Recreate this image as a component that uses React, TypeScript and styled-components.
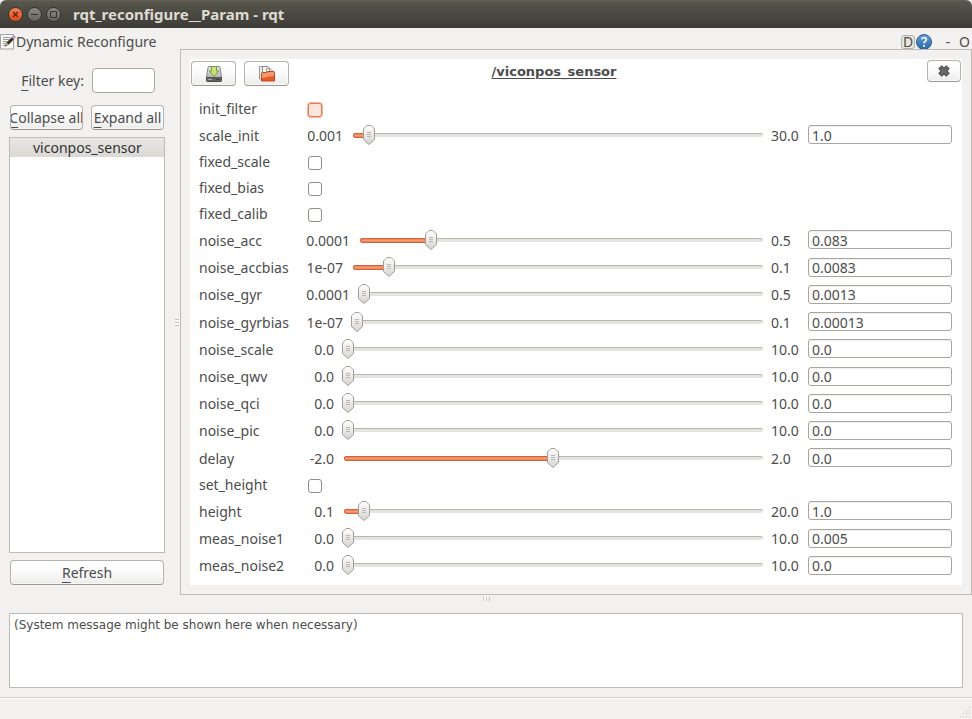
import React, { useState } from 'react';
import styled, { createGlobalStyle, css } from 'styled-components';

const GlobalStyle = createGlobalStyle`
  * { box-sizing: border-box; }
  html, body { margin: 0; padding: 0; }
  body {
    background: #f2f1ef;
    color: #4c4c4c;
    font: 14px/20px "Noto Sans", "Open Sans", sans-serif;
  }
  button, input, textarea { font: inherit; color: inherit; margin: 0; }
`;

const raised = css`
  border: 1px solid #b5b2ad;
  border-bottom-color: #9c9993;
  border-radius: 4px;
  background: linear-gradient(#ffffff 0%, #fbfbfb 45%, #ececeb 100%);
  box-shadow: inset 0 0 0 1px #ffffff99;
`;

const Window = styled.div`
  display: flex;
  flex-direction: column;
  min-height: 100vh;
`;

const TitleBar = styled.header`
  display: flex;
  align-items: center;
  gap: 4px;
  height: 28px;
  padding: 0 8px;
  border-radius: 6px 6px 0 0;
  background: linear-gradient(#65635a 0, #57564b 2px, #3c3b37 100%);
`;

const WindowTitle = styled.h1`
  margin: 0 0 0 8px;
  font-size: 15px;
  line-height: 20px;
  font-weight: 700;
  color: #dfdbd2;
  white-space: nowrap;
`;

const WindowButton = styled.button<{ $close?: boolean }>`
  display: flex;
  width: 15px;
  height: 15px;
  padding: 0;
  border: 1px solid #34332e;
  border-radius: 50%;
  background: ${p => (p.$close ? 'linear-gradient(#f4825c, #df4a16)' : 'linear-gradient(#8b897f, #66645c)')};
`;

const DockHeader = styled.div`
  display: flex;
  align-items: center;
  height: 21px;
  padding: 6px 2px 0 0;
`;

const DockTitle = styled.h2`
  flex: 1;
  margin: 0;
  font-size: 14px;
  line-height: 14px;
  font-weight: 400;
  white-space: nowrap;
`;

const DockButton = styled.button<{ $framed?: boolean; $gap?: number }>`
  display: flex;
  align-items: center;
  justify-content: center;
  min-width: ${p => (p.$framed ? '14px' : '8px')};
  height: 14px;
  margin-left: ${p => p.$gap ?? 0}px;
  padding: 0;
  border: ${p => (p.$framed ? '1px solid #b5b2ad' : 'none')};
  border-radius: 3px;
  background: ${p => (p.$framed ? '#e9e6e0' : 'none')};
  line-height: 14px;
`;

const Body = styled.main`
  flex: 1;
  display: flex;
  min-height: 0;
`;

const Sidebar = styled.aside`
  display: flex;
  flex-direction: column;
  width: 172px;
  padding: 19px 7px 10px 9px;
`;

const FilterRow = styled.div`
  display: flex;
  align-items: center;
  justify-content: flex-end;
  gap: 8px;
  padding-right: 10px;
`;

const Label = styled.label`
  white-space: nowrap;
`;

const Mnemonic = styled.span`
  text-decoration: underline;
  text-decoration-thickness: 1px;
  text-underline-offset: 4px;
`;

const FilterInput = styled.input`
  width: 63px;
  height: 25px;
  padding: 0 4px;
  border: 1px solid #a9a6a0;
  border-radius: 4px;
  background: #fff;
`;

const ButtonRow = styled.div`
  display: flex;
  gap: 8px;
  margin: 12px 0 7px;
  padding: 0 1px;
`;

const PushButton = styled.button`
  ${raised}
  flex: 1;
  display: flex;
  align-items: center;
  justify-content: center;
  min-width: 0;
  height: 25px;
  padding: 0;
  overflow: hidden;
  white-space: nowrap;
`;

const NodeList = styled.ul`
  flex: 1;
  margin: 0;
  padding: 0;
  border: 1px solid #bebbb6;
  background: #fff;
  list-style: none;
`;

const NodeItem = styled.li`
  height: 19px;
  padding-left: 23px;
  background: linear-gradient(#e8e7e6, #dbd8d5);
  line-height: 20px;
  color: #323232;
`;

const RefreshRow = styled.div`
  display: flex;
  margin-top: 7px;
  padding: 0 1px;
`;

const Splitter = styled.div<{ $row?: boolean }>`
  display: flex;
  align-items: center;
  justify-content: center;
  ${p => (p.$row ? 'height: 8px;' : 'width: 8px;')}
`;

const Frame = styled.section`
  flex: 1;
  display: flex;
  min-width: 0;
  padding: 9px;
  border: 1px solid #bebbb6;
`;

const Panel = styled.form`
  flex: 1;
  display: flex;
  flex-direction: column;
  min-width: 0;
  padding: 1px 1px 5px;
  background: #fff;
`;

const Tools = styled.div`
  display: grid;
  grid-template-columns: 1fr auto 1fr;
  height: 36px;
`;

const ToolGroup = styled.div`
  display: flex;
  gap: 8px;
  padding-top: 1px;
`;

const ToolButton = styled.button<{ $small?: boolean }>`
  ${raised}
  display: flex;
  align-items: center;
  justify-content: center;
  justify-self: end;
  width: ${p => (p.$small ? '34px' : '45px')};
  height: ${p => (p.$small ? '22px' : '25px')};
  padding: 0;
`;

const NodeTitle = styled.h3`
  margin: 2px 44px 0 0;
  font: 700 13px/20px "DejaVu Sans", sans-serif;
  text-decoration: underline;
  text-decoration-thickness: 1px;
  text-underline-offset: 2px;
`;

const Rows = styled.div`
  flex: 1;
  display: flex;
  flex-direction: column;
  padding: 0 9px 0 8px;
`;

const Row = styled.div<{ $check?: boolean }>`
  display: grid;
  grid-template-columns: 98px 1fr;
  column-gap: 8px;
  align-items: center;
  ${p => (p.$check ? 'flex: 0 0 26px;' : 'flex: 1 0 27px;')}
`;

const Controls = styled.div`
  display: flex;
  align-items: center;
  gap: 8px;
  min-width: 0;
`;

const Limit = styled.span<{ $w: number; $left?: boolean }>`
  flex: 0 0 ${p => p.$w}px;
  text-align: ${p => (p.$left ? 'left' : 'right')};
  white-space: nowrap;
`;

const SliderBox = styled.div`
  flex: 1;
  display: grid;
  align-items: center;
  min-width: 0;
  margin-bottom: 2px;
`;

const Groove = styled.div`
  grid-area: 1 / 1;
  height: 4px;
  margin-left: 2px;
  border-top: 1px solid #b9b6ae;
  border-radius: 2px;
  background: #e4e3e0;
`;

const Fill = styled.div`
  height: 5px;
  margin-top: -1px;
  border: 1px solid #d2633c;
  border-radius: 2px;
  background: linear-gradient(#ee7a4d, #fa9e76 50%, #ee7a4d);
`;

const thumb = `<svg xmlns='http://www.w3.org/2000/svg' width='12' height='20'><defs><linearGradient id='g' x2='0' y2='1'><stop stop-color='#fff'/><stop offset='1' stop-color='#d6d4d1'/></linearGradient></defs><path d='M4 .5h4l3.500 3.500v10.500l-5.500 5-5.500-5v-10.500z' fill='url(#g)' stroke='#a19e99' stroke-linejoin='round'/><path d='M4 7.500h4M4 9.500h4M4 11.500h4' stroke='#bbb8b4'/></svg>`;

const Range = styled.input`
  grid-area: 1 / 1;
  appearance: none;
  width: 100%;
  min-width: 0;
  height: 20px;
  background: transparent;
  outline: none;
  &::-webkit-slider-thumb {
    appearance: none;
    width: 12px;
    height: 20px;
    background: url("data:image/svg+xml,${encodeURIComponent(thumb).replace(/'/g, '%27').replace(/\(/g, '%28').replace(/\)/g, '%29')}") no-repeat;
  }
`;

const ValueInput = styled.input`
  flex: 0 0 144px;
  width: 144px;
  height: 19px;
  margin-bottom: 2px;
  padding: 1px 3px 0;
  border: 1px solid #a9a6a0;
  border-radius: 3px;
  background: #fff;
  box-shadow: inset 0 1px #f1f0ef;
  line-height: 16px;
`;

const Check = styled.input<{ $hot?: boolean }>`
  appearance: none;
  width: 14px;
  height: 14px;
  margin: 2px 0 0 3px;
  border: 1px solid ${p => (p.$hot ? '#e07a54' : '#928f8a')};
  border-radius: 3px;
  background: ${p => (p.$hot ? '#fde5dd' : '#fff')};
  box-shadow: ${p => (p.$hot ? '0 0 0 1px #f4b8a2' : 'none')};
  &:checked { background: #ee7a4d; }
`;

const Messages = styled.div`
  display: flex;
  padding: 10px 9px 9px;
`;

const MessageBox = styled.textarea`
  flex: 1;
  height: 75px;
  padding: 3px 4px;
  border: 1px solid #bebbb6;
  background: #fff;
  font: 12px/16px "DejaVu Sans", sans-serif;
  resize: none;
  outline: none;
`;

const StatusBar = styled.footer`
  display: flex;
  align-items: flex-end;
  justify-content: flex-end;
  height: 22px;
  padding: 0 1px 1px 0;
  border-top: 1px solid #d3d0cc;
  box-shadow: inset 0 1px #fff;
`;

const Icon = styled.svg`
  display: block;
  flex: none;
`;

type Param = {
  name: string;
  min?: string;
  max?: string;
  value?: string;
  pos?: number;
};

const params: Param[] = [
  { name: 'init_filter' },
  { name: 'scale_init', min: '0.001', max: '30.0', value: '1.0', pos: 3 },
  { name: 'fixed_scale' },
  { name: 'fixed_bias' },
  { name: 'fixed_calib' },
  { name: 'noise_acc', min: '0.0001', max: '0.5', value: '0.083', pos: 17 },
  { name: 'noise_accbias', min: '1e-07', max: '0.1', value: '0.0083', pos: 8 },
  { name: 'noise_gyr', min: '0.0001', max: '0.5', value: '0.0013', pos: 0 },
  { name: 'noise_gyrbias', min: '1e-07', max: '0.1', value: '0.00013', pos: 0 },
  { name: 'noise_scale', min: '0.0', max: '10.0', value: '0.0', pos: 0 },
  { name: 'noise_qwv', min: '0.0', max: '10.0', value: '0.0', pos: 0 },
  { name: 'noise_qci', min: '0.0', max: '10.0', value: '0.0', pos: 0 },
  { name: 'noise_pic', min: '0.0', max: '10.0', value: '0.0', pos: 0 },
  { name: 'delay', min: '-2.0', max: '2.0', value: '0.0', pos: 50 },
  { name: 'set_height' },
  { name: 'height', min: '0.1', max: '20.0', value: '1.0', pos: 4 },
  { name: 'meas_noise1', min: '0.0', max: '10.0', value: '0.005', pos: 0 },
  { name: 'meas_noise2', min: '0.0', max: '10.0', value: '0.0', pos: 0 },
];

const limitWidth = (text: string) => (text.length > 5 ? 45 : text.length > 4 ? 38 : 29);

function CheckRow({ param, hot }: { param: Param; hot: boolean }) {
  return (
    <Row $check>
      <Label htmlFor={param.name}>{param.name}</Label>
      <Controls>
        <Check id={param.name} type="checkbox" $hot={hot} />
      </Controls>
    </Row>
  );
}

function SliderRow({ param }: { param: Param }) {
  const [pos, setPos] = useState(param.pos ?? 0);
  return (
    <Row>
      <Label htmlFor={param.name}>{param.name}</Label>
      <Controls>
        <Limit $w={limitWidth(param.min!)}>{param.min}</Limit>
        <SliderBox>
          <Groove>{pos > 0 && <Fill style={{ width: `${pos}%` }} />}</Groove>
          <Range
            type="range"
            min={0}
            max={100}
            value={pos}
            aria-label={`${param.name} slider`}
            onChange={e => setPos(Number(e.target.value))}
          />
        </SliderBox>
        <Limit $w={29} $left>{param.max}</Limit>
        <ValueInput id={param.name} type="text" defaultValue={param.value} />
      </Controls>
    </Row>
  );
}

const NotepadIcon = () => (
  <Icon width="16" height="16" viewBox="0 0 16 16" fill="none">
    <path d="M.5 .5h13v14.500h-13z" fill="#fafafa" stroke="#a3a29f" />
    <path d="M3 3.500h7M3 5.500h6M3 7.500h4M3 9.500h3M3 11.500h3" stroke="#9a9a9a" />
    <path d="M5 12.500l1.500-4L12 3l2 2.200-5.500 5.500z" fill="#33332f" />
    <path d="M6.500 8.500l2 2.200L5 12.500z" fill="#e0c15a" />
    <path d="M5 12.500l1-2 .900 1z" fill="#222" />
    <path d="M11.500 3.500l1.800-1.700q1.600-.3 2 1.400L13.800 5.300z" fill="#d6a6c9" stroke="#8f6884" strokeWidth=".6" />
  </Icon>
);

const HelpIcon = () => (
  <Icon width="16" height="16" viewBox="0 0 16 16" fill="none">
    <defs>
      <linearGradient id="help" x2="0" y2="1">
        <stop stopColor="#6d9edb" />
        <stop offset="1" stopColor="#2468a0" />
      </linearGradient>
    </defs>
    <circle cx="8" cy="8" r="7.500" fill="url(#help)" stroke="#2c5f93" />
    <path d="M5.500 5.300C6.500 3 10.500 3.400 10.300 5.700 10.200 7.300 8 7.500 8 9.500" stroke="#fff" strokeWidth="1.600" />
    <path d="M7.100 11h1.800v1.700H7.100z" fill="#fff" />
  </Icon>
);

const SaveIcon = () => (
  <Icon width="16" height="16" viewBox="0 0 16 16" fill="none">
    <defs>
      <linearGradient id="disk" x2="0" y2="1">
        <stop stopColor="#e6e6e6" />
        <stop offset="1" stopColor="#a4a4a4" />
      </linearGradient>
    </defs>
    <path d="M2 1.500q.1-1 1-1h10q.9 0 1 1l1.500 9.500v3.500q0 1-1 1h-13q-1 0-1-1V11z" fill="url(#disk)" stroke="#858585" />
    <path d="M.5 11.500h15v3q0 1-1 1h-13q-1 0-1-1z" fill="#62625f" stroke="#505050" />
    <path d="M2 13.500h4" stroke="#aaa" />
    <path d="M10 13.500h4" stroke="#3c3c3c" />
    <path d="M5.500 .5h5V5h2.300L8 10.500 3.200 5h2.300z" fill="#c3e47c" stroke="#75a02c" />
  </Icon>
);

const FolderIcon = () => (
  <Icon width="16" height="16" viewBox="0 0 16 16" fill="none">
    <path d="M.5 .5h6v12.500h-6z" fill="#ededed" stroke="#999" />
    <path d="M3.500 .5h5.500l2 2v8h-7.500z" fill="#f6f6f6" stroke="#8d8d8d" />
    <path d="M7.500 2.500h3.500l2.500 2.500v5h-6z" fill="#fff" stroke="#999" />
    <path d="M10.500 2.500v3h3" stroke="#999" />
    <path d="M2.500 7.500q0-1 1-1h4l1-1h6q1 0 1 1v8.500h-13z" fill="#e35b28" stroke="#c04a1e" />
    <path d="M3 7h5l1-1h6v4q-6 .5-12 2z" fill="#f4986e" />
  </Icon>
);

const CloseIcon = () => (
  <Icon width="14" height="14" viewBox="0 0 14 14">
    <path d="M3 3l8 8M11 3l-8 8" stroke="#454545" strokeWidth="5" />
    <path d="M3 3l8 8M11 3l-8 8" stroke="#686868" strokeWidth="3" />
  </Icon>
);

const Grip = ({ row }: { row?: boolean }) => (
  <Icon width="8" height="8" viewBox="0 0 8 8">
    <path d={row ? 'M1.500 2v4M4.500 2v4M7.500 2v4' : 'M3 1.500h4M3 4.500h4M3 7.500h4'} stroke="#c6c3be" />
    <path d={row ? 'M2.500 2v4M5.500 2v4' : 'M3 2.500h4M3 5.500h4'} stroke="#fff" />
  </Icon>
);

export default function App() {
  return (
    <Window>
      <GlobalStyle />
      <TitleBar>
        <WindowButton $close aria-label="Close window">
          <Icon width="13" height="13" viewBox="0 0 13 13"><path d="M4 4l5 5M9 4l-5 5" stroke="#59230f" strokeWidth="1.300" /></Icon>
        </WindowButton>
        <WindowButton aria-label="Minimize">
          <Icon width="13" height="13" viewBox="0 0 13 13"><path d="M3 6.500h7" stroke="#34332e" /></Icon>
        </WindowButton>
        <WindowButton aria-label="Maximize">
          <Icon width="13" height="13" viewBox="0 0 13 13"><path d="M3.500 3.500h6v6h-6z" fill="none" stroke="#34332e" /></Icon>
        </WindowButton>
        <WindowTitle>rqt_reconfigure__Param - rqt</WindowTitle>
      </TitleBar>

      <DockHeader>
        <NotepadIcon />
        <DockTitle>Dynamic Reconfigure</DockTitle>
        <DockButton $framed>D</DockButton>
        <DockButton $gap={1} aria-label="Help"><HelpIcon /></DockButton>
        <DockButton $gap={12}>-</DockButton>
        <DockButton $gap={7}>O</DockButton>
      </DockHeader>

      <Body>
        <Sidebar>
          <FilterRow>
            <Label htmlFor="filter"><Mnemonic>F</Mnemonic>ilter key:</Label>
            <FilterInput id="filter" type="text" />
          </FilterRow>
          <ButtonRow>
            <PushButton><span><Mnemonic>C</Mnemonic>ollapse all</span></PushButton>
            <PushButton><span><Mnemonic>E</Mnemonic>xpand all</span></PushButton>
          </ButtonRow>
          <NodeList>
            <NodeItem>viconpos_sensor</NodeItem>
          </NodeList>
          <RefreshRow>
            <PushButton><span><Mnemonic>R</Mnemonic>efresh</span></PushButton>
          </RefreshRow>
        </Sidebar>
        <Splitter><Grip /></Splitter>
        <Frame>
          <Panel>
            <Tools>
              <ToolGroup>
                <ToolButton type="button" aria-label="Save parameters"><SaveIcon /></ToolButton>
                <ToolButton type="button" aria-label="Load parameters"><FolderIcon /></ToolButton>
              </ToolGroup>
              <NodeTitle>/viconpos_sensor</NodeTitle>
              <ToolButton type="button" $small aria-label="Close node"><CloseIcon /></ToolButton>
            </Tools>
            <Rows>
              {params.map((p, i) =>
                p.min === undefined
                  ? <CheckRow key={p.name} param={p} hot={i === 0} />
                  : <SliderRow key={p.name} param={p} />
              )}
            </Rows>
          </Panel>
        </Frame>
      </Body>

      <Splitter $row><Grip row /></Splitter>
      <Messages>
        <MessageBox readOnly aria-label="System messages" defaultValue="(System message might be shown here when necessary)" />
      </Messages>
      <StatusBar>
        <Icon width="12" height="12" viewBox="0 0 12 12" fill="#cbc8c3">
          <path d="M10 1h1v1h-1zM10 4h1v1h-1zM7 4h1v1h-1zM10 7h1v1h-1zM7 7h1v1h-1zM4 7h1v1h-1zM10 10h1v1h-1zM7 10h1v1h-1zM4 10h1v1h-1zM1 10h1v1h-1z" />
        </Icon>
      </StatusBar>
    </Window>
  );
}
